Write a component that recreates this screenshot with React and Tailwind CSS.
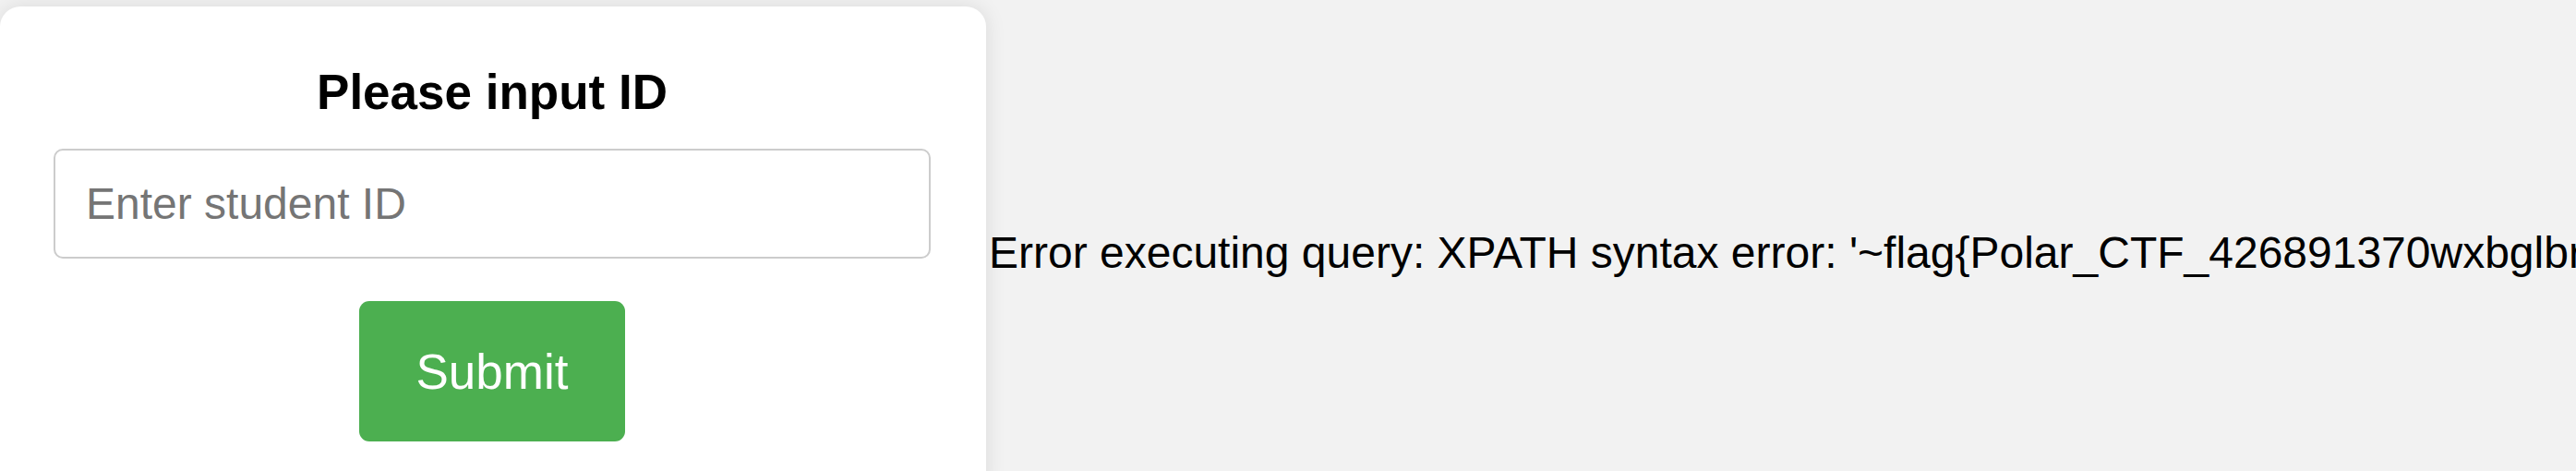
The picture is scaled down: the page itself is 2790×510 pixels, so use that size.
import React, { useState } from "react";

const App = () => {
  const [studentId, setStudentId] = useState("");
  const error =
    "Error executing query: XPATH syntax error: '~flag{Polar_CTF_426891370wxbglbr7xkq}'";

  return (
    <div className="w-screen h-screen overflow-hidden bg-[#f2f2f2] font-['Liberation_Sans',Arial,sans-serif]">
      <div className="flex items-center pt-[7px]">
        <form
          onSubmit={(e) => e.preventDefault()}
          className="shrink-0 w-[1068px] h-[533px] bg-white rounded-[22px] shadow-[0_0_22px_rgba(0,0,0,0.1)] pt-[62px] pl-[58px] pr-[60px] flex flex-col items-center"
        >
          <h2 className="text-[53px] leading-[61px] font-bold text-black">Please input ID</h2>
          <input
            type="text"
            value={studentId}
            onChange={(e) => setStudentId(e.target.value)}
            placeholder="Enter student ID"
            className="mt-[31px] w-full h-[119px] border-2 border-[#cccccc] rounded-[10px] px-[33px] text-[48px] text-black placeholder:text-[#757575] outline-none"
          />
          <button
            type="submit"
            className="mt-[46px] w-[288px] h-[152px] bg-[#4caf50] rounded-[11px] text-white text-[53px] leading-[61px]"
          >
            Submit
          </button>
        </form>
        <div className="ml-[3px] whitespace-nowrap text-[48px] text-black">{error}</div>
      </div>
    </div>
  );
};

export default App;
